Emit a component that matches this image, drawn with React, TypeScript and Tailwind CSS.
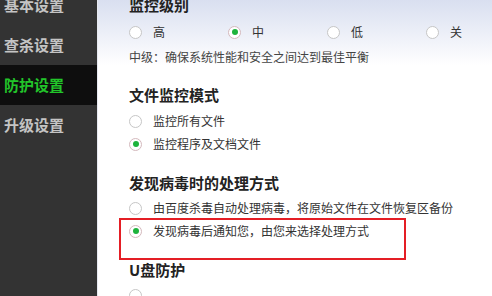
const font = { fontFamily: '"Microsoft YaHei", "Noto Sans CJK SC", "Noto Sans", sans-serif' };

const Radio = ({ checked = false }: { checked?: boolean }) => (
  <span
    className={`w-[13px] h-[13px] rounded-full border bg-white flex items-center justify-center shrink-0 ${
      checked ? "border-[#d4b9bd]" : "border-[#c6c6c6]"
    }`}
  >
    {checked && <span className="w-[6px] h-[6px] rounded-full bg-[#1db33c]" />}
  </span>
);

const Option = ({ label, checked = false, className = "" }: { label: string; checked?: boolean; className?: string }) => (
  <div className={`flex items-center h-5 ${className}`}>
    <Radio checked={checked} />
    <span className="ml-[11px] text-[12px] text-[#333]">{label}</span>
  </div>
);

const Heading = ({ children, className = "" }: { children: React.ReactNode; className?: string }) => (
  <div className={`h-5 leading-5 text-[15px] font-bold text-[#222] ${className}`}>{children}</div>
);

export default function App() {
  const menu = ["基本设置", "查杀设置", "防护设置", "升级设置"];
  return (
    <div className="w-[492px] h-[296px] flex overflow-hidden bg-white" style={font}>
      {/* Sidebar */}
      <div className="w-[97px] bg-[#333333] shrink-0">
        <div className="-mt-[15px]">
          {menu.map((m) => (
            <div
              key={m}
              className={`h-10 flex items-center pl-[4px] text-[15px] font-bold ${
                m === "防护设置" ? "bg-[#0e0e0e] text-[#22c52a]" : "text-[#c4c4c4]"
              }`}
            >
              {m}
            </div>
          ))}
        </div>
      </div>

      {/* Content */}
      <div className="flex-1 bg-gradient-to-b from-[#d9dff0] via-white via-[22%] to-white pl-[31px] border-l border-[#e6e9f0]">
        <div className="-mt-[5px]">
          <Heading>监控级别</Heading>
          <div className="flex mt-[7px]">
            {[
              ["高", false],
              ["中", true],
              ["低", false],
              ["关", false],
            ].map(([l, c]) => (
              <Option key={l as string} label={l as string} checked={c as boolean} className="w-[99px]" />
            ))}
          </div>
          <div className="mt-[5px] h-5 leading-5 text-[12px] text-[#444]">中级：确保系统性能和安全之间达到最佳平衡</div>

          <Heading className="mt-[18px]">文件监控模式</Heading>
          <Option label="监控所有文件" className="mt-[6px]" />
          <Option label="监控程序及文档文件" checked className="mt-[3px]" />

          <Heading className="mt-[19px]">发现病毒时的处理方式</Heading>
          <Option label="由百度杀毒自动处理病毒，将原始文件在文件恢复区备份" className="mt-[5px]" />
          <div className="-ml-[10px] w-[287px] h-[42px] border-2 border-[#e41e25] pl-[8px] pt-[1px]">
            <Option label="发现病毒后通知您，由您来选择处理方式" checked />
          </div>

          <Heading>U盘防护</Heading>
          <Option label="" className="mt-[5px]" />
        </div>
      </div>
    </div>
  );
}
